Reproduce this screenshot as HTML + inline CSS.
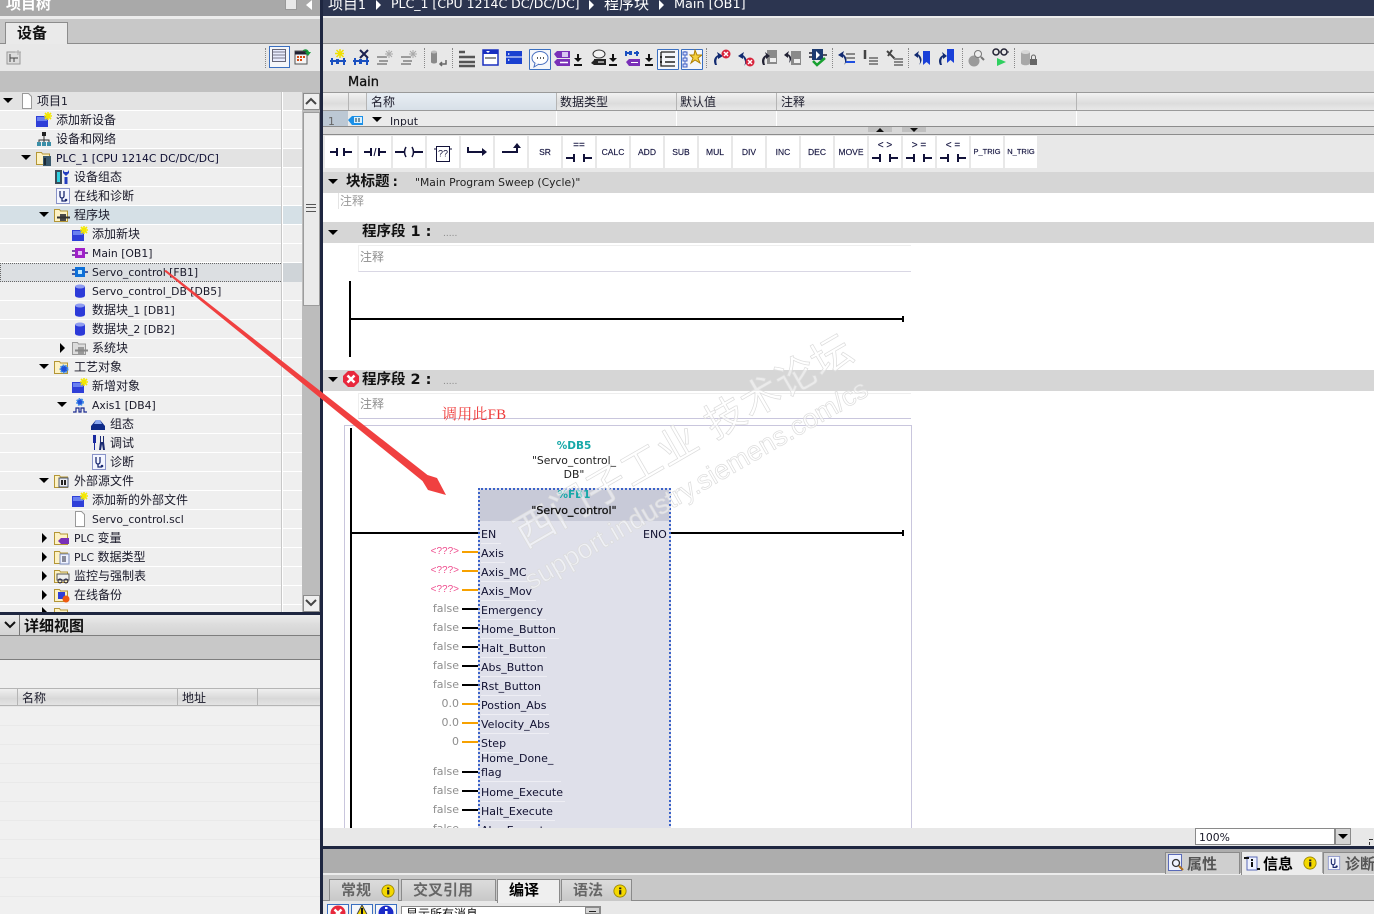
<!DOCTYPE html>
<html><head><meta charset="utf-8"><title>TIA Portal</title>
<style>
html,body{margin:0;padding:0;width:1374px;height:914px;overflow:hidden;background:#e8e8e8}
body{position:relative;font-family:"DejaVu Sans","WenQuanYi Zen Hei","Noto Sans CJK SC",sans-serif;font-size:12px;color:#1a1a2a}
div,span,svg{position:absolute}
i{font-style:normal;font-size:10.8px;position:static}
b{font-weight:bold}
.t{white-space:nowrap;line-height:14px}
.r{left:0;width:302px;height:18px;background:#efefef;border-bottom:1px solid #fff}
.r .t{top:2px}
.r svg{top:1px;width:16px;height:16px}
.h{background:#e3e3e3}
.ad{width:0;height:0;border-left:5px solid transparent;border-right:5px solid transparent;border-top:5px solid #000;top:6px}
.ar{width:0;height:0;border-top:5px solid transparent;border-bottom:5px solid transparent;border-left:5px solid #000;top:4px}
.b{width:32px;height:32px;background:#fff;top:136px;text-align:center;font-size:8.5px;line-height:32px;font-family:"Liberation Sans",sans-serif;color:#151540;-webkit-text-stroke:.15px #151540}
.b svg{left:0;top:0;width:32px;height:32px}
.tool svg{top:0;left:0;width:20px;height:20px}
.ti{top:48px;width:20px;height:20px}
.sep{top:48px;height:20px;width:0;border-left:1px dotted #888}
.sel{top:49px;width:20px;height:19px;border:1px solid #3a6fc0;background:#f4f6fa;border-radius:1px}
.th{top:93px;height:17px;background:linear-gradient(#f2f2f2,#dcdcdc 60%,#e8e8e8);border-right:1px solid #b5b5b5}
.lb{left:481px;font-size:11px;color:#101030;white-space:nowrap;line-height:14px}
.ul{left:481px;height:1px;background:#eeeef4}
.v{width:60px;left:399px;text-align:right;font-size:11px;color:#8e8e8e;line-height:14px}
.vq{color:#ef4f8f;font-size:10px;font-family:"Liberation Sans",sans-serif}
.s{left:462px;width:16px;height:2px;background:#000}
.o{background:#f7a100}
.tab{background:linear-gradient(#dcdcdc,#c8c8c8);border:1px solid #8a8a8a;border-bottom:0;color:#666;font-size:15px;font-weight:bold;line-height:20px;top:879px;height:21px;box-sizing:content-box;white-space:nowrap}
.hd{font-size:14.500px;font-weight:bold;color:#111}
</style></head>
<body>
<svg width="0" height="0" style="left:0;top:0">
<defs>
<symbol id="nw" viewBox="0 0 16 16"><rect x="0" y="4" width="12" height="11" fill="#2f3fd8"/><rect x="1" y="5" width="10" height="4" fill="#6a80f0"/><path d="M12 0v8M8 4h8M9 1l6 6M15 1l-6 6" stroke="#f4e800" stroke-width="1.6"/></symbol>
<symbol id="net" viewBox="0 0 16 16"><path d="M8 5v4M3 13V9h10v4M8 9v4" stroke="#333" fill="none"/><rect x="6" y="1" width="4" height="4" fill="#222"/><rect x="1" y="11" width="4" height="4" fill="#3b8fa8"/><rect x="6" y="11" width="4" height="4" fill="#3b8fa8"/><rect x="11" y="11" width="4" height="4" fill="#3b8fa8"/></symbol>
<symbol id="fo" viewBox="0 0 16 16"><path d="M.5 14.5V2.5h5l1 1.5h7v10.500z" fill="#fdf2c4" stroke="#b49635"/></symbol>
<symbol id="plc" viewBox="0 0 16 16"><use href="#fo"/><rect x="7" y="6" width="8" height="10" fill="#39586c"/><rect x="8" y="8" width="2" height="7" fill="#1c2a34"/></symbol>
<symbol id="cfg" viewBox="0 0 16 16"><rect x="1" y="1" width="7" height="14" fill="#3a4a58"/><rect x="3" y="3" width="3" height="10" fill="#30d0e0"/><path d="M12 8v7" stroke="#233cc0" stroke-width="3"/><path d="M9 1v3l3 3 3-3V1l-1.500 2h-3z" fill="#233cc0"/></symbol>
<symbol id="dg" viewBox="0 0 16 16"><rect x="1.500" y=".5" width="13" height="15" fill="#f4f6ff" stroke="#8a94c8"/><path d="M5 3v5a2 2 0 0 0 4 0V3M7 10v3h4" fill="none" stroke="#1b2a70" stroke-width="1.300"/><circle cx="11" cy="12" r="1.300" fill="#1b2a70"/></symbol>
<symbol id="pb" viewBox="0 0 16 16"><use href="#fo"/><rect x="6" y="7" width="6" height="7" fill="#4a4a4a"/><path d="M3 10.500h13" stroke="#333" stroke-width="2"/></symbol>
<symbol id="ob" viewBox="0 0 16 16"><path d="M0 6h4M0 10h4M12 8h4" stroke="#5a1090" stroke-width="1.500"/><rect x="3" y="3" width="10" height="10" fill="#a020c8"/><rect x="6" y="6" width="4" height="4" fill="#e8c0f8"/></symbol>
<symbol id="fb" viewBox="0 0 16 16"><path d="M0 6h4M0 10h4M12 8h4" stroke="#103090" stroke-width="1.500"/><rect x="3" y="3" width="10" height="10" fill="#0d6fd8"/><rect x="6" y="6" width="4" height="4" fill="#bfe8ff"/></symbol>
<symbol id="db" viewBox="0 0 16 16"><path d="M3 3.500v9c0 3 10 3 10 0v-9z" fill="#2c3ad8"/><ellipse cx="8" cy="3.500" rx="5" ry="2" fill="#8f9cf0"/></symbol>
<symbol id="sy" viewBox="0 0 16 16"><path d="M.5 14.500V2.500h5l1 1.500h7v10.500z" fill="#dcdcdc" stroke="#999"/><rect x="6" y="7" width="6" height="7" fill="#999"/><path d="M3 10.500h13" stroke="#888" stroke-width="2"/></symbol>
<symbol id="te" viewBox="0 0 16 16"><use href="#fo"/><circle cx="10" cy="10" r="3.500" fill="#1f4fd8" stroke="#3f8fe8" stroke-dasharray="1.500 1" stroke-width="2"/></symbol>
<symbol id="ax" viewBox="0 0 16 16"><circle cx="8" cy="5" r="3" fill="#1f4fd8" stroke="#3f8fe8" stroke-dasharray="1.500 1" stroke-width="2"/><path d="M1 15h3v-4h3v4h2v-4h3v4h3" fill="none" stroke="#1b2a90" stroke-width="1.200"/></symbol>
<symbol id="tb" viewBox="0 0 16 16"><path d="M1 14V10L6 4h4l5 6v4z" fill="#0e2a88"/><path d="M6 4h4l2 4H4z" fill="#8aa8f0"/></symbol>
<symbol id="sc" viewBox="0 0 16 16"><path d="M3 0h3v8H5v7H4V8H3z" fill="#1a2aa0"/><path d="M9 15l1-8V1h1v6h2V1h1v6l1 8h-2l-1-6-1 6z" fill="#1a2a70"/></symbol>
<symbol id="ex" viewBox="0 0 16 16"><use href="#fo"/><rect x="5" y="5" width="9" height="9" fill="#e8eaf0" stroke="#4a5670"/><rect x="7" y="7" width="2" height="5" fill="#222"/><rect x="10" y="7" width="2" height="5" fill="#222"/></symbol>
<symbol id="dc" viewBox="0 0 16 16"><path d="M3.500 .5h6l3 3v12h-9z" fill="#fff" stroke="#999"/></symbol>
<symbol id="pv" viewBox="0 0 16 16"><use href="#fo"/><path d="M4 11l3-3h8v6H7z" fill="#7a30b8"/></symbol>
<symbol id="dt" viewBox="0 0 16 16"><use href="#fo"/><rect x="6" y="5" width="9" height="10" fill="#eef2ff" stroke="#7a8ab8"/><path d="M9 7v6M11 7v6" stroke="#223"/></symbol>
<symbol id="mo" viewBox="0 0 16 16"><use href="#fo"/><rect x="3" y="6" width="12" height="6" fill="#eee" stroke="#555"/><circle cx="6" cy="13" r="2" fill="none" stroke="#224"/><circle cx="12" cy="13" r="2" fill="none" stroke="#224"/></symbol>
<symbol id="ba" viewBox="0 0 16 16"><use href="#fo"/><rect x="4" y="5" width="7" height="7" fill="#2f3fd8"/><circle cx="12" cy="12" r="3.500" fill="#f05a10"/></symbol>
<symbol id="lnd" viewBox="0 0 32 32"><path d="M5 16h7M12 12v8M19 12v8M20 16h7" stroke="#12123a" stroke-width="2" fill="none"/></symbol>
<symbol id="cmp" viewBox="0 0 32 32"><path d="M3 22h8M11 18v8M21 18v8M21 22h8" stroke="#12123a" stroke-width="2" fill="none"/></symbol>
<symbol id="in" viewBox="0 0 16 16"><circle cx="8" cy="8" r="7" fill="#f4d800" stroke="#9a8600"/><rect x="7" y="7" width="2.500" height="5" fill="#222"/><rect x="7" y="4" width="2.500" height="2" fill="#222"/></symbol>
</defs>
</svg>

<!-- LEFT PANEL -->
<div style="left:0;top:0;width:320px;height:16px;background:#a9a9a9"></div>
<div class="t" style="left:6px;top:-3px;font-size:15px;font-weight:bold;color:#fff">项目树</div>
<div style="left:285px;top:0;width:10px;height:9px;background:#e8e8e8;border:1px solid #999;border-top:0"></div>
<div style="left:306px;top:0;width:0;height:0;border-top:5px solid transparent;border-bottom:5px solid transparent;border-right:6px solid #fff"></div>
<div style="left:0;top:16px;width:320px;height:3px;background:#ececec"></div>
<div style="left:0;top:19px;width:320px;height:24px;background:#c8c8c8"></div>
<div style="left:0;top:43px;width:320px;height:1px;background:#8c8c8c"></div>
<div style="left:5px;top:22px;width:61px;height:22px;background:#eaeaea;border:1px solid #8c8c8c;border-bottom:0"><span class="t" style="left:11px;top:3px;font-weight:bold;font-size:15px;color:#111">设备</span></div>
<div style="left:0;top:44px;width:320px;height:27px;background:#e8e8e8"></div>
<svg style="left:6px;top:49px;width:16px;height:16px" viewBox="0 0 16 16"><rect x="1" y="3" width="13" height="12" fill="#ddd" stroke="#999"/><path d="M4 5v8M4 9h8M8 9v4" stroke="#444"/><path d="M12 1v5M9 3h6" stroke="#aaa"/></svg>
<div style="left:265px;top:48px;width:0;height:20px;border-left:1px dotted #888"></div>
<div style="left:269px;top:46px;width:19px;height:20px;background:#f4f6fa;border:1px solid #3a6fc0"></div>
<svg style="left:272px;top:49px;width:15px;height:14px" viewBox="0 0 15 14"><rect x=".5" y=".5" width="13" height="12" fill="#e8ecff" stroke="#667"/><path d="M1 3h12M1 6h12M1 9h12" stroke="#778"/></svg>
<svg style="left:294px;top:48px;width:18px;height:18px" viewBox="0 0 18 18"><rect x="1" y="3" width="12" height="13" fill="#f4f4f4" stroke="#555"/><path d="M1 5h12" stroke="#223" stroke-width="3"/><path d="M3 9h2M6 9h2M9 9h2M3 12h2M6 12h2" stroke="#d84a10" stroke-width="2"/><path d="M8 3c3-3 6-2 7 1h2l-3 4-3-4h2c-1-1-3-2-5-1z" fill="#169a3a"/></svg>
<div style="left:0;top:71px;width:320px;height:21px;background:#c0c0c0"></div>

<div class="r h" style="top:92px"><div class="ad" style="left:3px"></div><svg style="left:19px" viewBox="0 0 16 16"><use href="#dc"/></svg><div class="t" style="left:37px">项目<i>1</i></div></div>
<div class="r" style="top:111px"><svg style="left:36px"><use href="#nw"/></svg><div class="t" style="left:56px">添加新设备</div></div>
<div class="r" style="top:130px"><svg style="left:36px"><use href="#net"/></svg><div class="t" style="left:56px">设备和网络</div></div>
<div class="r h" style="top:149px"><div class="ad" style="left:21px"></div><svg style="left:36px"><use href="#plc"/></svg><div class="t" style="left:56px;color:#0c0c30"><i style="font-weight:500">PLC_1 [CPU 1214C DC/DC/DC]</i></div></div>
<div class="r" style="top:168px"><svg style="left:54px"><use href="#cfg"/></svg><div class="t" style="left:74px">设备组态</div></div>
<div class="r" style="top:187px"><svg style="left:55px"><use href="#dg"/></svg><div class="t" style="left:74px">在线和诊断</div></div>
<div class="r" style="top:206px;background:#d5e0e6"><div class="ad" style="left:39px"></div><svg style="left:54px"><use href="#pb"/></svg><div class="t" style="left:74px">程序块</div></div>
<div class="r" style="top:225px"><svg style="left:72px"><use href="#nw"/></svg><div class="t" style="left:92px">添加新块</div></div>
<div class="r" style="top:244px"><svg style="left:72px"><use href="#ob"/></svg><div class="t" style="left:92px"><i>Main [OB1]</i></div></div>
<div class="r" style="top:263px;background:#dcdfe2;height:17px;border:1px dotted #666;width:281px"><svg style="left:71px;top:0"><use href="#fb"/></svg><div class="t" style="left:91px;top:1px"><i>Servo_control [FB1]</i></div></div>
<div style="left:283px;top:263px;width:19px;height:19px;background:#cfd4d8"></div>
<div class="r" style="top:282px"><svg style="left:72px"><use href="#db"/></svg><div class="t" style="left:92px"><i>Servo_control_DB [DB5]</i></div></div>
<div class="r" style="top:301px"><svg style="left:72px"><use href="#db"/></svg><div class="t" style="left:92px">数据块<i>_1 [DB1]</i></div></div>
<div class="r" style="top:320px"><svg style="left:72px"><use href="#db"/></svg><div class="t" style="left:92px">数据块<i>_2 [DB2]</i></div></div>
<div class="r" style="top:339px"><div class="ar" style="left:60px"></div><svg style="left:72px"><use href="#sy"/></svg><div class="t" style="left:92px">系统块</div></div>
<div class="r" style="top:358px"><div class="ad" style="left:39px"></div><svg style="left:54px"><use href="#te"/></svg><div class="t" style="left:74px">工艺对象</div></div>
<div class="r" style="top:377px"><svg style="left:72px"><use href="#nw"/></svg><div class="t" style="left:92px">新增对象</div></div>
<div class="r" style="top:396px"><div class="ad" style="left:57px"></div><svg style="left:72px"><use href="#ax"/></svg><div class="t" style="left:92px"><i>Axis1 [DB4]</i></div></div>
<div class="r" style="top:415px"><svg style="left:90px"><use href="#tb"/></svg><div class="t" style="left:110px">组态</div></div>
<div class="r" style="top:434px"><svg style="left:90px"><use href="#sc"/></svg><div class="t" style="left:110px">调试</div></div>
<div class="r" style="top:453px"><svg style="left:91px"><use href="#dg"/></svg><div class="t" style="left:110px">诊断</div></div>
<div class="r" style="top:472px"><div class="ad" style="left:39px"></div><svg style="left:54px"><use href="#ex"/></svg><div class="t" style="left:74px">外部源文件</div></div>
<div class="r" style="top:491px"><svg style="left:72px"><use href="#nw"/></svg><div class="t" style="left:92px">添加新的外部文件</div></div>
<div class="r" style="top:510px"><svg style="left:72px"><use href="#dc"/></svg><div class="t" style="left:92px"><i>Servo_control.scl</i></div></div>
<div class="r" style="top:529px"><div class="ar" style="left:42px"></div><svg style="left:54px"><use href="#pv"/></svg><div class="t" style="left:74px"><i>PLC </i>变量</div></div>
<div class="r" style="top:548px"><div class="ar" style="left:42px"></div><svg style="left:54px"><use href="#dt"/></svg><div class="t" style="left:74px"><i>PLC </i>数据类型</div></div>
<div class="r" style="top:567px"><div class="ar" style="left:42px"></div><svg style="left:54px"><use href="#mo"/></svg><div class="t" style="left:74px">监控与强制表</div></div>
<div class="r" style="top:586px"><div class="ar" style="left:42px"></div><svg style="left:54px"><use href="#ba"/></svg><div class="t" style="left:74px">在线备份</div></div>
<div class="r" style="top:605px;height:7px;overflow:hidden;border:0"><div class="ar" style="left:42px;top:2px"></div><svg style="left:54px"><use href="#fo"/></svg></div>
<div style="left:281px;top:92px;width:1px;height:520px;background:#fff;border-left:1px solid #c8c8c8"></div>
<!-- scrollbar -->
<div style="left:302px;top:92px;width:18px;height:520px;background:#bcbcbc"></div>
<div style="left:303px;top:93px;width:15px;height:15px;background:#efefef;border:1px solid #8c8c8c"></div>
<svg style="left:304px;top:96px;width:14px;height:10px" viewBox="0 0 14 10"><path d="M2 8l5-5 5 5" fill="none" stroke="#444" stroke-width="2"/></svg>
<div style="left:303px;top:112px;width:15px;height:192px;background:#eaeaea;border:1px solid #9c9c9c"></div>
<div style="left:306px;top:204px;width:10px;height:6px;border-top:1px solid #555;border-bottom:1px solid #555"></div>
<div style="left:306px;top:207px;width:10px;height:1px;background:#555"></div>
<div style="left:303px;top:595px;width:15px;height:15px;background:#efefef;border:1px solid #8c8c8c"></div>
<svg style="left:304px;top:598px;width:14px;height:10px" viewBox="0 0 14 10"><path d="M2 2l5 5 5-5" fill="none" stroke="#444" stroke-width="2"/></svg>

<!-- details -->
<div style="left:0;top:612px;width:320px;height:3px;background:#1e2640"></div>
<div style="left:0;top:615px;width:320px;height:20px;background:linear-gradient(#ececec,#dcdcdc 50%,#d4d4d4)"></div>
<svg style="left:3px;top:620px;width:14px;height:10px" viewBox="0 0 14 10"><path d="M2 2l5 5 5-5" fill="none" stroke="#111" stroke-width="2"/></svg>
<div style="left:19px;top:615px;width:1px;height:20px;background:#777"></div>
<div class="t" style="left:24px;top:619px;font-size:15px;font-weight:bold;color:#111">详细视图</div>
<div style="left:0;top:635px;width:320px;height:25px;background:#c8c8c8;border-top:1px solid #7e7e7e;border-bottom:1px solid #7e7e7e;box-sizing:border-box"></div>
<div style="left:0;top:660px;width:320px;height:28px;background:#efefef"></div>
<div style="left:0;top:688px;width:320px;height:18px;background:linear-gradient(#efefef,#d8d8d8 60%,#e4e4e4);border-top:1px solid #b5b5b5;border-bottom:1px solid #b5b5b5;box-sizing:border-box"></div>
<div style="left:17px;top:688px;width:1px;height:18px;background:#b5b5b5"></div>
<div style="left:177px;top:688px;width:1px;height:18px;background:#b5b5b5"></div>
<div style="left:257px;top:688px;width:1px;height:18px;background:#b5b5b5"></div>
<div class="t" style="left:22px;top:691px">名称</div>
<div class="t" style="left:182px;top:691px">地址</div>
<div style="left:0;top:707px;width:320px;height:207px;background:repeating-linear-gradient(#f0f0f0 0,#f0f0f0 18px,#e9e9e9 18px,#e9e9e9 19px)"></div>

<!-- divider -->
<div style="left:320px;top:0;width:3px;height:914px;background:#1e2640"></div>

<!-- RIGHT TITLE -->
<div style="left:323px;top:0;width:1051px;height:16px;background:#2c3550"></div>
<div class="t" style="left:328px;top:-3px;font-size:15px;color:#fff">项目<i style="font-size:12.500px">1</i></div>
<div class="t" style="left:391px;top:-3px;color:#fff"><i style="font-size:12.500px">PLC_1 [CPU 1214C DC/DC/DC]</i></div>
<div class="t" style="left:604px;top:-3px;font-size:15px;color:#fff">程序块</div>
<div class="t" style="left:674px;top:-3px;color:#fff"><i style="font-size:12.800px">Main [OB1]</i></div>
<div class="ar" style="left:376px;top:0;border-left-color:#fff"></div>
<div class="ar" style="left:589px;top:0;border-left-color:#fff"></div>
<div class="ar" style="left:659px;top:0;border-left-color:#fff"></div>
<div style="left:323px;top:16px;width:1051px;height:2px;background:#ececec"></div>
<div style="left:323px;top:18px;width:1051px;height:25px;background:#c8c8c8"></div>
<div style="left:323px;top:43px;width:1051px;height:1px;background:#8c8c8c"></div>
<div style="left:323px;top:44px;width:1051px;height:27px;background:#e8e8e8"></div>

<!-- toolbar -->
<div class="sep" style="left:424px"></div><div class="sep" style="left:452px"></div><div class="sep" style="left:706px"></div><div class="sep" style="left:832px"></div><div class="sep" style="left:908px"></div><div class="sep" style="left:962px"></div><div class="sep" style="left:1014px"></div>
<div class="sel" style="left:529px"></div><div class="sel" style="left:657px"></div><div class="sel" style="left:681px"></div>

<svg class="ti" style="left:329px" viewBox="0 0 20 20"><path d="M1 13h6M10 13h7M3 10v7M15 10v7" stroke="#1a50c0" stroke-width="2"/><rect x="7" y="11" width="3" height="5" fill="#1a50c0"/><path d="M11 1v9M6 5.500h9M7.500 2l7 7M14.500 2l-7 7" stroke="#f0e000" stroke-width="1.500"/></svg>
<svg class="ti" style="left:352px" viewBox="0 0 20 20"><path d="M1 13h6M10 13h7M3 10v7M15 10v7" stroke="#1a50c0" stroke-width="2"/><rect x="7" y="11" width="3" height="5" fill="#1a50c0"/><path d="M8 2l8 8M16 2l-8 8" stroke="#1b2050" stroke-width="2"/></svg>
<svg class="ti" style="left:376px" viewBox="0 0 20 20"><path d="M1 9h10M3 13h9M1 16h10" stroke="#9a9a9a" stroke-width="2"/><path d="M13 2v8M9 6h8M10 3l6 6M16 3l-6 6" stroke="#aaa"/></svg>
<svg class="ti" style="left:400px" viewBox="0 0 20 20"><path d="M1 9h10M3 13h9M1 16h10" stroke="#9a9a9a" stroke-width="2"/><path d="M13 2v8M9 6h8M10 3l6 6M16 3l-6 6" stroke="#aaa"/></svg>
<svg class="ti" style="left:429px" viewBox="0 0 20 20"><path d="M2 4v10c0 2 6 2 6 0V4z" fill="#8a8a8a"/><ellipse cx="5" cy="4" rx="3" ry="1.500" fill="#bbb"/><path d="M17 12v4h-6M13 14l-2 2 2 2" fill="none" stroke="#666" stroke-width="1.500"/></svg>
<svg class="ti" style="left:458px" viewBox="0 0 20 20"><path d="M1 4h6M1 9h16M1 14h16M1 18h16" stroke="#555" stroke-width="2.500"/></svg>
<svg class="ti" style="left:482px" viewBox="0 0 20 20"><rect x="1" y="2" width="15" height="15" fill="#fff" stroke="#1a30c0" stroke-width="1.500"/><rect x="1" y="2" width="15" height="4" fill="#1a30c0"/><path d="M3 10h11" stroke="#222"/><path d="M4 3l2 2 2-2z" fill="#fff"/></svg>
<svg class="ti" style="left:505px" viewBox="0 0 20 20"><rect x="1" y="3" width="16" height="13" fill="#1a40d0"/><path d="M1 9h16" stroke="#fff"/><path d="M3 5l2 1-2 1zM3 11l2 1-2 1z" fill="#fff"/></svg>
<svg class="ti" style="left:530px;top:49px" viewBox="0 0 20 20"><ellipse cx="10" cy="9" rx="8" ry="6.500" fill="#fff" stroke="#4a70c0"/><path d="M5 14l-1 4 5-3" fill="#fff" stroke="#4a70c0"/><path d="M7 9h1M10 9h1M13 9h1" stroke="#222" stroke-width="1.500"/></svg>
<svg class="ti" style="left:554px" viewBox="0 0 20 20"><path d="M0 6l3-3h13v7H3z" fill="#7a30b8"/><path d="M0 14l3-3h13v7H3z" fill="#7a30b8"/><rect x="8" y="4" width="6" height="5" fill="#d8c8f0"/><path d="M6 14.500h8" stroke="#fff" stroke-width="1.500"/></svg>
<svg class="ti" style="left:590px" viewBox="0 0 20 20"><ellipse cx="9" cy="6" rx="6" ry="4" fill="#f4f4f4" stroke="#333"/><path d="M4 11h12v6H4zM1 15l3-3v5z" fill="#222"/><rect x="8" y="13" width="6" height="2" fill="#9a9a9a"/></svg>
<svg class="ti" style="left:624px" viewBox="0 0 20 20"><path d="M1 5h4M10 5h5M2 3v5M13 3v5" stroke="#1a50c0" stroke-width="2"/><rect x="5" y="3" width="3" height="4" fill="#1a50c0"/><path d="M2 14l3-3h11v7H5z" fill="#7a30b8"/><path d="M7 14.500h7" stroke="#fff"/></svg>
<svg class="ti" style="left:572px;top:48px" viewBox="0 0 20 20"><path d="M3 9V5h2v4h3l-4 4-4-4zM0 15h8v2H0z" transform="translate(2 1)" fill="#111"/></svg>
<svg class="ti" style="left:607px;top:48px" viewBox="0 0 20 20"><path d="M3 9V5h2v4h3l-4 4-4-4zM0 15h8v2H0z" transform="translate(2 1)" fill="#111"/></svg>
<svg class="ti" style="left:643px;top:48px" viewBox="0 0 20 20"><path d="M3 9V5h2v4h3l-4 4-4-4zM0 15h8v2H0z" transform="translate(2 1)" fill="#111"/></svg>
<svg class="ti" style="left:658px;top:49px" viewBox="0 0 20 20"><path d="M3 3v14h14M3 3h14" stroke="#222" stroke-width="1.300" fill="none"/><path d="M7 8h10M7 13h10" stroke="#222" stroke-width="1.500"/><rect x="2" y="7" width="2" height="2" fill="#222"/><rect x="2" y="12" width="2" height="2" fill="#222"/></svg>
<svg class="ti" style="left:682px;top:49px" viewBox="0 0 20 20"><path d="M3 2v14" stroke="#5070d0"/><rect x="1" y="3" width="4" height="3" fill="#d8e0ff" stroke="#4060c0"/><rect x="1" y="9" width="4" height="3" fill="#d8e0ff" stroke="#4060c0"/><rect x="1" y="15" width="4" height="3" fill="#d8e0ff" stroke="#4060c0"/><path d="M13 1l2 5 5 0-4 3 2 5-5-3-4 3 2-5-3-3h4z" fill="#f4d040" stroke="#b08000"/></svg>

<svg class="ti" style="left:712px" viewBox="0 0 20 20"><path d="M3 17c-2-4-1-8 3-10l-1-3 6 4-5 3v-2c-2 2-2 5-1 8z" fill="#112a70"/><circle cx="14" cy="6" r="4.500" fill="#d8243c"/><path d="M12 4l4 4M16 4l-4 4" stroke="#fff" stroke-width="1.500"/></svg>
<svg class="ti" style="left:736px" viewBox="0 0 20 20"><path d="M7 17c2-3 1-6-1-9v2L1 7l6-4-1 3c4 3 5 7 1 11z" fill="#112a70" transform="translate(1 1)"/><circle cx="14" cy="14" r="4.500" fill="#d8243c"/><path d="M12 12l4 4M16 12l-4 4" stroke="#fff" stroke-width="1.500"/></svg>
<svg class="ti" style="left:760px" viewBox="0 0 20 20"><rect x="7" y="2" width="10" height="14" fill="#8a8a8a"/><rect x="10" y="10" width="6" height="4" fill="#eee"/><path d="M3 17c-2-4-1-8 3-10l-1-3 5 4-4 3v-2c-2 2-2 5-1 8z" fill="#223"/></svg>
<svg class="ti" style="left:784px" viewBox="0 0 20 20"><rect x="7" y="3" width="10" height="14" fill="#8a8a8a"/><rect x="10" y="11" width="6" height="4" fill="#eee"/><path d="M5 15c1-3 1-5-1-7v2L0 7l5-4-1 3c4 2 4 6 1 9z" fill="#223"/></svg>
<svg class="ti" style="left:808px" viewBox="0 0 20 20"><path d="M1 5h4M1 9h4M14 7h5" stroke="#223" stroke-width="1.500"/><rect x="4" y="1" width="11" height="11" fill="#1c3a70"/><path d="M8 3l4 4-4 4z" fill="#fff"/><path d="M5 13l4 4 8-7" fill="none" stroke="#18a030" stroke-width="2.500"/></svg>

<svg class="ti" style="left:837px" viewBox="0 0 20 20"><path d="M7 17c2-3 1-6-1-9v2L1 7l6-4-1 3c4 3 5 7 1 11z" fill="#112a70"/><path d="M9 6h9" stroke="#888" stroke-width="2"/><path d="M9 10h9" stroke="#888" stroke-width="2"/><path d="M9 14h9" stroke="#2050e0" stroke-width="2"/></svg>
<svg class="ti" style="left:861px" viewBox="0 0 20 20"><path d="M4 2v9" stroke="#444" stroke-width="2.500"/><path d="M8 10h9M8 13h9M8 16h9" stroke="#888" stroke-width="2"/></svg>
<svg class="ti" style="left:885px" viewBox="0 0 20 20"><path d="M2 3l8 8M7 2L3 8" stroke="#444" stroke-width="2"/><path d="M9 11h9M9 14h9M9 17h9" stroke="#888" stroke-width="2"/></svg>
<svg class="ti" style="left:913px" viewBox="0 0 20 20"><path d="M6 17c2-3 1-6-1-9v2L1 7l5-4-1 3c4 3 5 7 1 11z" fill="#112a70"/><path d="M10 3h7v14l-3.500-3L10 17z" fill="#1a40d8"/></svg>
<svg class="ti" style="left:937px" viewBox="0 0 20 20"><path d="M3 17c-2-4-1-8 3-10l-1-3 5 4-4 3v-2c-2 2-2 5-1 8z" fill="#112a70"/><path d="M10 1h7v14l-3.500-3L10 15z" fill="#1a40d8"/></svg>
<svg class="ti" style="left:966px" viewBox="0 0 20 20"><circle cx="8" cy="13" r="5.500" fill="#9a9a9a"/><circle cx="12" cy="6" r="3.500" fill="#eee" stroke="#777"/><path d="M15 9l3 3" stroke="#777" stroke-width="2"/></svg>
<svg class="ti" style="left:991px" viewBox="0 0 20 20"><circle cx="5" cy="4" r="3" fill="none" stroke="#223" stroke-width="1.500"/><circle cx="13" cy="4" r="3" fill="none" stroke="#223" stroke-width="1.500"/><path d="M8 4h2M16 4h2" stroke="#223"/><path d="M6 10l9 4-9 4z" fill="#30d060"/></svg>
<svg class="ti" style="left:1019px" viewBox="0 0 20 20"><path d="M2 4v11c0 3 9 3 9 0V4z" fill="#a8a8a8"/><ellipse cx="6.500" cy="4" rx="4.500" ry="2" fill="#d8d8d8"/><rect x="11" y="11" width="7" height="6" fill="#666"/><path d="M12.500 11V9a2 2 0 0 1 4 0v2" fill="none" stroke="#666"/></svg>

<!-- main row -->
<div style="left:323px;top:71px;width:1051px;height:21px;background:#d6d6d6"></div>
<div class="t" style="left:348px;top:75px;color:#111"><i style="font-size:13px;-webkit-text-stroke:.3px #111">Main</i></div>
<div style="left:323px;top:92px;width:1051px;height:1px;background:#9a9a9a"></div>
<div class="th" style="left:323px;width:25px;"></div>
<div class="th" style="left:349px;width:17px"></div>
<div class="th" style="left:367px;width:189px;background:linear-gradient(#e8eef4,#d8e0e8)"></div>
<div class="th" style="left:557px;width:119px"></div>
<div class="th" style="left:677px;width:99px"></div>
<div class="th" style="left:777px;width:299px"></div>
<div class="th" style="left:1077px;width:297px;border:0"></div>
<div class="t" style="left:371px;top:95px">名称</div>
<div class="t" style="left:560px;top:95px">数据类型</div>
<div class="t" style="left:680px;top:95px">默认值</div>
<div class="t" style="left:781px;top:95px">注释</div>
<div style="left:323px;top:110px;width:1051px;height:1px;background:#9a9a9a"></div>
<div style="left:323px;top:111px;width:1051px;height:15px;background:#ebebeb"></div>
<div style="left:323px;top:111px;width:25px;height:15px;background:#bcc8d4"></div>
<div style="left:556px;top:111px;width:1px;height:15px;background:#fff"></div>
<div style="left:676px;top:111px;width:1px;height:15px;background:#fff"></div>
<div style="left:776px;top:111px;width:1px;height:15px;background:#fff"></div>
<div style="left:1076px;top:111px;width:1px;height:15px;background:#fff"></div>
<div class="t" style="left:328px;top:114px;color:#666"><i>1</i></div>
<svg style="left:348px;top:114px;width:17px;height:12px" viewBox="0 0 17 12"><path d="M0 6l4-4h11v9H4z" fill="#1a90e8"/><rect x="6" y="3" width="8" height="6" fill="#d8f0ff"/><path d="M8 4v4M11 4v4" stroke="#134"/></svg>
<div class="ad" style="left:372px;top:117px"></div>
<div class="t" style="left:390px;top:114px"><i>Input</i></div>
<div style="left:323px;top:126px;width:1051px;height:7px;background:#d8d8d8;border-top:1px solid #8c8c8c;border-bottom:1px solid #8c8c8c"></div>
<div style="left:868px;top:127px;width:24px;height:5px;background:#c0c0c0"></div>
<div style="left:902px;top:127px;width:24px;height:5px;background:#c0c0c0"></div>
<div style="left:876px;top:128px;width:0;height:0;border-left:4px solid transparent;border-right:4px solid transparent;border-bottom:4px solid #111"></div>
<div style="left:910px;top:128px;width:0;height:0;border-left:4px solid transparent;border-right:4px solid transparent;border-top:4px solid #111"></div>

<!-- LAD palette -->
<div style="left:323px;top:135px;width:1051px;height:37px;background:#e8e8e8"></div>
<div class="b" style="left:325px"><svg><use href="#lnd"/></svg></div>
<div class="b" style="left:359px"><svg viewBox="0 0 32 32"><path d="M5 16h7M12 12v8M20 12v8M20 16h7" stroke="#12123a" stroke-width="2"/><path d="M15 20l2-8" stroke="#12123a"/></svg></div>
<div class="b" style="left:393px"><svg viewBox="0 0 32 32"><path d="M2 16h9M21 16h9" stroke="#12123a" stroke-width="2"/><path d="M13 11q-3 5 0 10M19 11q3 5 0 10" fill="none" stroke="#12123a" stroke-width="1.500"/></svg></div>
<div class="b" style="left:427px"><svg viewBox="0 0 32 32"><rect x="9.500" y="10.500" width="13" height="15" fill="none" stroke="#12123a"/><path d="M7 13h3M22 13h3" stroke="#12123a"/><text x="16" y="20.500" font-size="9" text-anchor="middle" fill="#12123a" font-family="Liberation Sans">??</text></svg></div>
<div class="b" style="left:461px"><svg viewBox="0 0 32 32"><path d="M7 11v5h15" stroke="#12123a" stroke-width="2" fill="none"/><path d="M21 12l5 4-5 4z" fill="#12123a"/></svg></div>
<div class="b" style="left:495px"><svg viewBox="0 0 32 32"><path d="M7 16h15v-5" stroke="#12123a" stroke-width="2" fill="none"/><path d="M18 12l4-5 4 5z" fill="#12123a"/></svg></div>
<div class="b" style="left:529px">SR</div>
<div class="b" style="left:563px"><svg><use href="#cmp"/></svg><div class="t" style="left:0;top:3px;width:32px;font-size:10px;line-height:14px">==</div></div>
<div class="b" style="left:597px">CALC</div>
<div class="b" style="left:631px">ADD</div>
<div class="b" style="left:665px">SUB</div>
<div class="b" style="left:699px">MUL</div>
<div class="b" style="left:733px">DIV</div>
<div class="b" style="left:767px">INC</div>
<div class="b" style="left:801px">DEC</div>
<div class="b" style="left:835px">MOVE</div>
<div class="b" style="left:869px"><svg><use href="#cmp"/></svg><div class="t" style="left:0;top:3px;width:32px;font-size:10px;line-height:14px">&lt; &gt;</div></div>
<div class="b" style="left:903px"><svg><use href="#cmp"/></svg><div class="t" style="left:0;top:3px;width:32px;font-size:10px;line-height:14px">&gt; =</div></div>
<div class="b" style="left:937px"><svg><use href="#cmp"/></svg><div class="t" style="left:0;top:3px;width:32px;font-size:10px;line-height:14px">&lt; =</div></div>
<div class="b" style="left:971px;font-size:7.500px">P_TRIG</div>
<div class="b" style="left:1005px;font-size:7.500px">N_TRIG</div>

<!-- editor -->
<div style="left:323px;top:172px;width:1051px;height:656px;background:#fff"></div>
<div style="left:323px;top:172px;width:1051px;height:21px;background:#d6d6d6"></div>
<div class="ad" style="left:328px;top:179px;border-left-width:5px;border-right-width:5px"></div>
<div class="t hd" style="left:346px;top:175px;word-spacing:-2px">块标题 <span style="position:static;font-size:13px">:</span></div>
<div class="t" style="left:415px;top:175px;color:#222"><i>"Main Program Sweep (Cycle)"</i></div>
<div style="left:338px;top:193px;width:1px;height:16px;background:#e4e4e4"></div>
<div class="t" style="left:340px;top:194px;color:#9a9a9a">注释</div>

<div style="left:323px;top:222px;width:1051px;height:21px;background:#d6d6d6"></div>
<div class="ad" style="left:328px;top:230px"></div>
<div class="t hd" style="left:362px;top:225px">程序段 1 :</div>
<div class="t" style="left:443px;top:227px;font-size:9px;color:#888">.....</div>
<div style="left:358px;top:245px;width:553px;height:27px;border-top:1px solid #eee;border-left:1px solid #eee;border-bottom:1px solid #d9d7e4;box-sizing:border-box"></div>
<div class="t" style="left:360px;top:250px;color:#8e8e8e">注释</div>
<div style="left:349px;top:281px;width:2px;height:76px;background:#000"></div>
<div style="left:351px;top:318px;width:552px;height:2px;background:#000"></div>
<div style="left:902px;top:316px;width:2px;height:6px;background:#000"></div>

<div style="left:323px;top:370px;width:1051px;height:21px;background:#d6d6d6"></div>
<div class="ad" style="left:328px;top:377px"></div>
<svg style="left:343px;top:371px;width:16px;height:16px" viewBox="0 0 16 16"><path d="M5 0h6l5 5v6l-5 5H5l-5-5V5z" fill="#e8283c"/><path d="M4.500 4.500l7 7M11.500 4.500l-7 7" stroke="#fff" stroke-width="2.500"/></svg>
<div class="t hd" style="left:362px;top:373px">程序段 2 :</div>
<div class="t" style="left:443px;top:375px;font-size:9px;color:#888">.....</div>
<div style="left:358px;top:393px;width:553px;height:26px;border-top:1px solid #eee;border-left:1px solid #eee;border-bottom:1px solid #c9c6dd;box-sizing:border-box"></div>
<div class="t" style="left:360px;top:397px;color:#8e8e8e">注释</div>
<div class="t" style="left:442px;top:406px;font-family:'Liberation Serif','Noto Serif CJK SC',serif;font-size:15px;letter-spacing:.2px;color:#ef3a3a;line-height:18px">调用此FB</div>
<div style="left:344px;top:425px;width:568px;height:403px;border:1px solid #c9c6dd;border-bottom:0;box-sizing:border-box"></div>
<div style="left:350px;top:428px;width:2px;height:400px;background:#000"></div>
<div style="left:352px;top:532px;width:126px;height:2px;background:#000"></div>
<div style="left:670px;top:532px;width:233px;height:2px;background:#000"></div>
<div style="left:902px;top:530px;width:2px;height:6px;background:#000"></div>

<div style="left:478px;top:488px;width:189px;height:340px;background:#dfe0ea;border:2px dotted #3a62c8;border-bottom:0"></div>
<div style="left:480px;top:490px;width:189px;height:31px;background:#c8cad8"></div>

<div class="lb" style="top:528px">EN</div><div class="lb" style="top:528px;left:643px">ENO</div>
<div class="ul" style="top:543px;width:20px"></div>
<div class="lb" style="top:547px">Axis</div><div class="ul" style="top:562px;width:24px"></div>
<div class="lb" style="top:566px">Axis_MC</div><div class="ul" style="top:581px;width:50px"></div>
<div class="lb" style="top:585px">Axis_Mov</div><div class="ul" style="top:600px;width:55px"></div>
<div class="lb" style="top:604px">Emergency</div><div class="ul" style="top:619px;width:65px"></div>
<div class="lb" style="top:623px">Home_Button</div><div class="ul" style="top:638px;width:78px"></div>
<div class="lb" style="top:642px">Halt_Button</div><div class="ul" style="top:657px;width:66px"></div>
<div class="lb" style="top:661px">Abs_Button</div><div class="ul" style="top:676px;width:66px"></div>
<div class="lb" style="top:680px">Rst_Button</div><div class="ul" style="top:695px;width:60px"></div>
<div class="lb" style="top:699px">Postion_Abs</div><div class="ul" style="top:714px;width:68px"></div>
<div class="lb" style="top:718px">Velocity_Abs</div><div class="ul" style="top:733px;width:68px"></div>
<div class="lb" style="top:737px">Step</div><div class="ul" style="top:752px;width:28px"></div>
<div class="lb" style="top:752px">Home_Done_</div>
<div class="lb" style="top:766px">flag</div><div class="ul" style="top:781px;width:80px"></div>
<div class="lb" style="top:786px">Home_Execute</div><div class="ul" style="top:801px;width:84px"></div>
<div class="lb" style="top:805px">Halt_Execute</div><div class="ul" style="top:820px;width:74px"></div>
<div class="lb" style="top:824px">Abs_Execute</div>

<div class="v vq" style="top:545px">&lt;???&gt;</div><div class="s o" style="top:551px"></div>
<div class="v vq" style="top:564px">&lt;???&gt;</div><div class="s o" style="top:570px"></div>
<div class="v vq" style="top:583px">&lt;???&gt;</div><div class="s o" style="top:589px"></div>
<div class="v" style="top:602px">false</div><div class="s" style="top:608px"></div>
<div class="v" style="top:621px">false</div><div class="s" style="top:627px"></div>
<div class="v" style="top:640px">false</div><div class="s" style="top:646px"></div>
<div class="v" style="top:659px">false</div><div class="s" style="top:665px"></div>
<div class="v" style="top:678px">false</div><div class="s" style="top:684px"></div>
<div class="v" style="top:697px">0.0</div><div class="s o" style="top:703px"></div>
<div class="v" style="top:716px">0.0</div><div class="s o" style="top:722px"></div>
<div class="v" style="top:735px">0</div><div class="s o" style="top:741px"></div>
<div class="v" style="top:765px">false</div><div class="s" style="top:771px"></div>
<div class="v" style="top:784px">false</div><div class="s" style="top:790px"></div>
<div class="v" style="top:803px">false</div><div class="s" style="top:809px"></div>
<div class="v" style="top:822px">false</div><div class="s" style="top:828px"></div>
<div class="t" style="left:524px;top:488px;width:100px;text-align:center;font-size:10.500px;font-weight:bold;color:#16a8a8">%FB1</div>

<!-- watermark -->
<svg style="left:323px;top:193px;width:1051px;height:635px" viewBox="323 193 1051 635">
<g transform="rotate(-30 690 465)" font-family="'WenQuanYi Zen Hei','Noto Sans CJK SC',sans-serif" fill="#ffffff" fill-opacity=".5" stroke="#dcdcdc" stroke-width=".7">
<text x="505" y="455" font-size="40" letter-spacing="1">西门子工业</text>
<text x="724" y="455" font-size="40" letter-spacing="1">技术论坛</text>
<text x="490" y="494" font-size="27" font-family="Liberation Sans">support.industry.siemens.com/cs</text>
</g></svg>

<div class="t" style="left:524px;top:439px;width:100px;text-align:center;font-size:10.500px;font-weight:bold;color:#16a8a8">%DB5</div>
<div class="t" style="left:524px;top:453px;width:100px;text-align:center;color:#222"><i>"Servo_control_</i></div>
<div class="t" style="left:524px;top:467px;width:100px;text-align:center;color:#222"><i>DB"</i></div>
<div class="t" style="left:479px;top:503px;width:190px;text-align:center;color:#111"><i style="-webkit-text-stroke:.3px #111;font-size:11px">"Servo_control"</i></div>

<!-- bottom -->
<div style="left:323px;top:828px;width:1051px;height:18px;background:#e8e8e8"></div>
<div class="t" style="left:1195px;top:828px;height:17px;background:#fff;border:1px solid #8a8a8a;line-height:17px;padding-left:3px;box-sizing:border-box;width:140px;font-size:11px"><i>100%</i></div>
<div style="left:1335px;top:828px;width:16px;height:17px;background:#d4d4d4;border:1px solid #8a8a8a;box-sizing:border-box"></div>
<div class="ad" style="left:1338px;top:834px"></div>
<div style="left:1369px;top:839px;width:4px;height:1px;background:#333"></div>
<div style="left:1369px;top:842px;width:1px;height:3px;background:#333"></div>
<div style="left:323px;top:846px;width:1051px;height:3px;background:#1e2640"></div>
<div style="left:323px;top:849px;width:1051px;height:24px;background:#adadad"></div>
<div style="left:323px;top:873px;width:1051px;height:2px;background:#ececec"></div>
<div style="left:323px;top:875px;width:1051px;height:25px;background:#c8c8c8"></div>
<div style="left:323px;top:900px;width:1051px;height:1px;background:#8a8a8a"></div>
<div style="left:323px;top:901px;width:1051px;height:13px;background:#e8e8e8"></div>

<!-- right tabs -->
<div style="left:1165px;top:852px;width:73px;height:21px;background:#cfcfcf;border:1px solid #8a8a8a;border-bottom:0"></div>
<svg style="left:1168px;top:854px;width:16px;height:18px" viewBox="0 0 16 18"><rect x=".5" y=".5" width="13" height="16" fill="#eef2ff" stroke="#5a6ab8"/><circle cx="8" cy="9" r="3.500" fill="none" stroke="#333" stroke-width="1.300"/><path d="M11 12l4 4" stroke="#b07020" stroke-width="2"/></svg>
<div class="t" style="left:1187px;top:857px;font-size:15px;font-weight:bold;color:#555">属性</div>
<div style="left:1241px;top:852px;width:80px;height:23px;background:#ececec;border-left:1px solid #8a8a8a"></div>
<svg style="left:1244px;top:855px;width:16px;height:17px" viewBox="0 0 16 17"><rect x="3" y="2" width="10" height="13" fill="#eef2ff" stroke="#5a6ab8"/><path d="M0 3h5M13 14h3" stroke="#111" stroke-width="2"/><rect x="7" y="7" width="2" height="5" fill="#111"/><rect x="7" y="4" width="2" height="2" fill="#111"/></svg>
<div class="t" style="left:1263px;top:857px;font-size:15px;font-weight:bold;color:#000">信息</div>
<svg style="left:1303px;top:856px;width:14px;height:14px"><use href="#in"/></svg>
<div style="left:1323px;top:852px;width:51px;height:21px;background:#cfcfcf;border:1px solid #8a8a8a;border-bottom:0"></div>
<svg style="left:1327px;top:855px;width:14px;height:16px" viewBox="0 0 16 16"><use href="#dg"/></svg>
<div class="t" style="left:1345px;top:857px;font-size:15px;font-weight:bold;color:#555">诊断</div>

<!-- bottom tabs -->
<div class="tab" style="left:329px;width:68px"><span style="left:11px;top:0">常规</span><svg style="left:51px;top:4px;width:14px;height:14px"><use href="#in"/></svg></div>
<div class="tab" style="left:401px;width:93px"><span style="left:11px;top:0">交叉引用</span></div>
<div class="tab" style="left:497px;width:61px;background:#efefef;color:#000;height:23px"><span style="left:11px;top:0">编译</span></div>
<div class="tab" style="left:561px;width:69px"><span style="left:11px;top:0">语法</span><svg style="left:51px;top:4px;width:14px;height:14px"><use href="#in"/></svg></div>
<div style="left:327px;top:904px;width:20px;height:10px;background:#f4f6fa;border:1px solid #3a6fc0"></div>
<div style="left:351px;top:904px;width:20px;height:10px;background:#f4f6fa;border:1px solid #3a6fc0"></div>
<div style="left:375px;top:904px;width:20px;height:10px;background:#f4f6fa;border:1px solid #3a6fc0"></div>
<svg style="left:330px;top:905px;width:16px;height:16px" viewBox="0 0 16 16"><circle cx="8" cy="8" r="7.500" fill="#e8283c"/><path d="M4.500 4.500l7 7M11.500 4.500l-7 7" stroke="#fff" stroke-width="2.500"/></svg>
<svg style="left:354px;top:905px;width:16px;height:16px" viewBox="0 0 16 16"><path d="M8 0l8 15H0z" fill="#f4d800" stroke="#444"/><rect x="7" y="3" width="2" height="6" fill="#111"/></svg>
<svg style="left:378px;top:905px;width:16px;height:16px" viewBox="0 0 16 16"><circle cx="8" cy="8" r="7.500" fill="#1a2ac8"/><rect x="7" y="2" width="2.500" height="2" fill="#fff"/><rect x="7" y="6" width="2.500" height="7" fill="#fff"/></svg>
<div style="left:401px;top:906px;width:198px;height:8px;background:#fff;border:1px solid #8a8a8a;overflow:hidden"><div class="t" style="left:4px;top:0;color:#111">显示所有消息</div></div>
<div style="left:585px;top:907px;width:15px;height:7px;background:#d4d4d4;border:1px solid #8a8a8a;box-sizing:border-box"></div>
<div style="left:589px;top:911px;width:7px;height:1px;background:#222"></div>

<!-- red arrow -->
<svg style="left:0;top:0;width:1374px;height:914px;pointer-events:none" viewBox="0 0 1374 914"><path d="M164 271L166 270 L427.500 475 L437 478 L446 495 L428 490 L422.500 481 Z" fill="#f04040"/></svg>
</body></html>
